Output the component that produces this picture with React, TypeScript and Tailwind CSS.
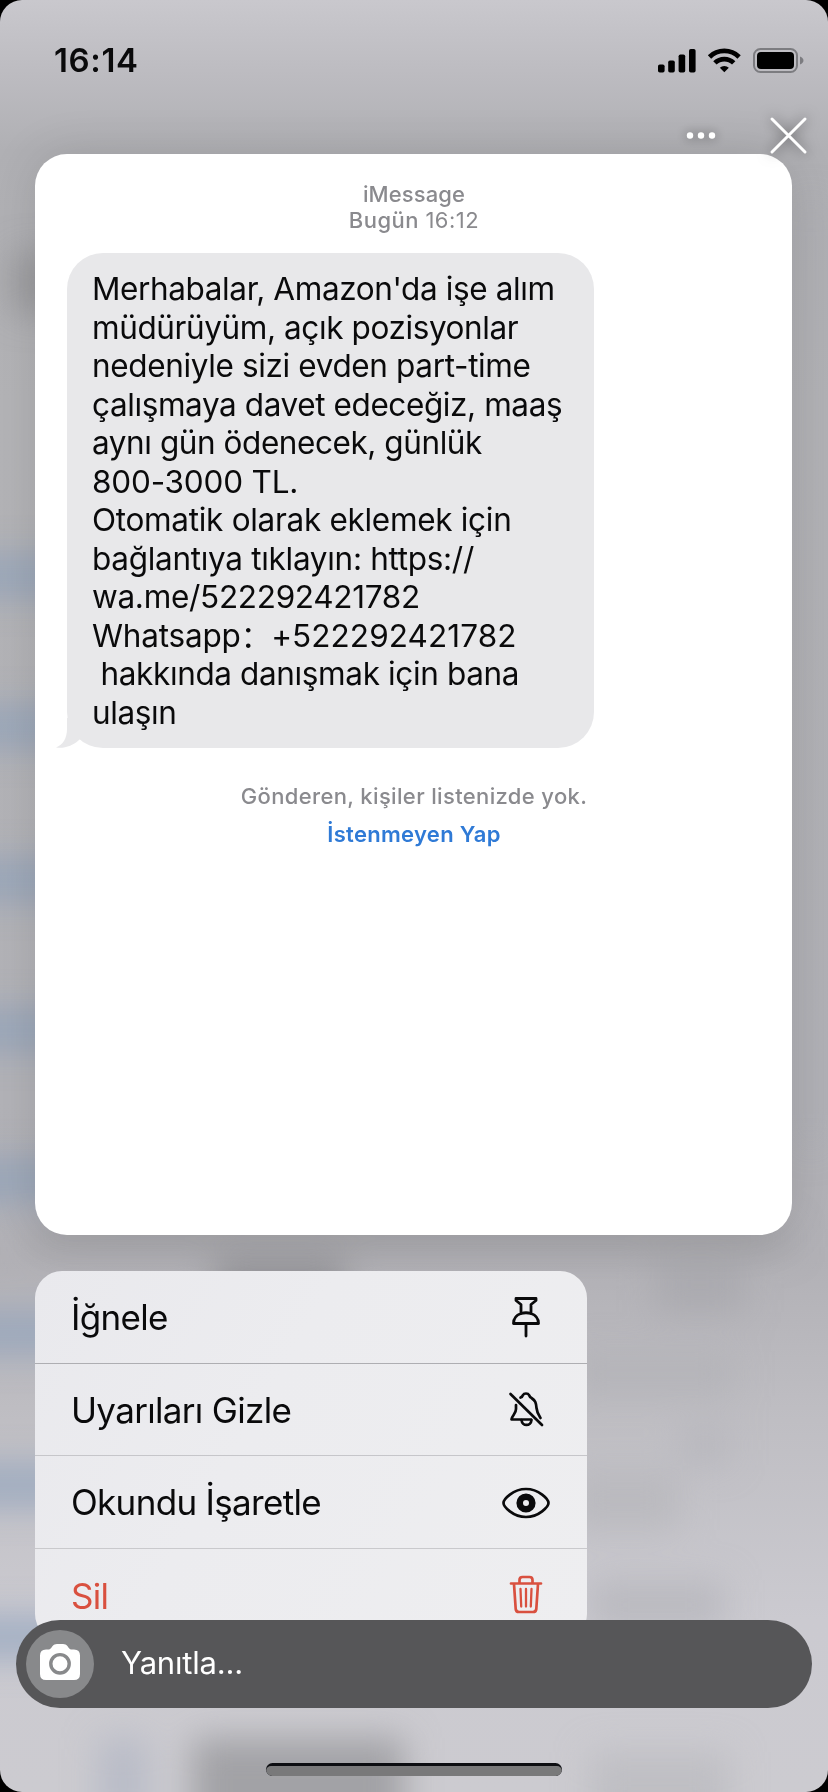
import type { ReactNode } from 'react';

const messageLines: { text: ReactNode; tracking: string }[] = [
  { text: "Merhabalar, Amazon'da işe alım", tracking: 'tracking-[-0.38px]' },
  { text: 'müdürüyüm, açık pozisyonlar', tracking: 'tracking-[-0.4px]' },
  { text: 'nedeniyle sizi evden part-time', tracking: 'tracking-[-0.36px]' },
  { text: 'çalışmaya davet edeceğiz, maaş', tracking: 'tracking-[-0.4px]' },
  { text: 'aynı gün ödenecek, günlük', tracking: 'tracking-[-0.43px]' },
  { text: '800-3000 TL.', tracking: 'tracking-[-0.2px]' },
  { text: 'Otomatik olarak eklemek için', tracking: 'tracking-[-0.3px]' },
  { text: 'bağlantıya tıklayın: https://', tracking: 'tracking-[-0.3px]' },
  { text: 'wa.me/522292421782', tracking: 'tracking-[-0.3px]' },
  {
    text: (
      <>
        Whatsapp<span className="-mr-[8px] text-[30px]">：</span> <span className="tracking-[0.08px]">+522292421782</span>
      </>
    ),
    tracking: 'tracking-[-0.2px]',
  },
  { text: ' hakkında danışmak için bana', tracking: 'tracking-[-0.37px]' },
  { text: 'ulaşın', tracking: 'tracking-[-0.4px]' },
];

// Vertical centres of the blurred unread markers behind the card
const smudges = [576, 727, 880, 1030, 1180, 1333, 1485, 1637];

function Backdrop() {
  return (
    <div className="absolute inset-0 overflow-hidden rounded-[22px] bg-[linear-gradient(180deg,#c9c8cd_0px,#bdbcc1_70px,#b0b0b4_150px,#b4b4b7_400px,#b3b3b8_1100px,#b2b1b6_1260px,#bfbec3_1420px,#cbcad0_1620px,#cccbd0_1792px)]">
      <svg width="828" height="1792" viewBox="0 0 828 1792">
        <defs>
          <filter id="soft" filterUnits="userSpaceOnUse" x="-100" y="0" width="1030" height="1900">
            <feGaussianBlur stdDeviation="17" />
          </filter>
        </defs>
        <g filter="url(#soft)">
          {smudges.map((y) => (
            <rect key={y} x="-60" y={y - 21} width="170" height="42" fill="#8c9fbb" opacity="0.65" />
          ))}
          <rect x="796" y="200" width="30" height="950" fill="#a9a9ae" opacity="0.35" />
          <rect x="10" y="252" width="90" height="62" fill="#8c8c90" opacity="0.6" />
          <rect x="30" y="1225" width="760" height="26" fill="#98989c" opacity="0.5" />
          <rect x="215" y="1262" width="130" height="48" fill="#858589" opacity="0.75" />
          <rect x="655" y="1262" width="90" height="50" fill="#a2a2a7" opacity="0.55" />
          <rect x="570" y="1352" width="165" height="44" fill="#b0b0b5" opacity="0.6" />
          <rect x="680" y="1425" width="50" height="40" fill="#b2b2b7" opacity="0.5" />
          <rect x="570" y="1470" width="110" height="60" fill="#b4b4b9" opacity="0.6" />
          <rect x="590" y="1580" width="135" height="50" fill="#b4b4b9" opacity="0.7" />
          <rect x="98" y="1738" width="50" height="90" fill="#b0b5c3" opacity="0.7" />
          <rect x="192" y="1738" width="212" height="110" fill="#a2a2a6" />
          <rect x="590" y="1752" width="140" height="80" fill="#bbbbc0" opacity="0.8" />
        </g>
      </svg>
    </div>
  );
}

function StatusBar() {
  return (
    <div className="flex h-[116px] items-center justify-between pl-[54px] pr-[23px] pt-1">
      <span className="text-[33px] font-semibold leading-none tracking-[0.6px]">16:14</span>
      <svg className="mt-[3px]" width="148" height="28" viewBox="0 0 148 28">
        <g fill="#000">
          <rect x="1" y="16.5" width="6.6" height="8" rx="1.8" />
          <rect x="11.2" y="12.5" width="6.6" height="12" rx="1.8" />
          <rect x="21.6" y="6.5" width="6.6" height="18" rx="1.8" />
          <rect x="32" y="1" width="6.6" height="23.5" rx="1.8" />
          <path d="M67.3 24.3 62.8 19.8a6.5 6.5 0 0 1 9 0z" />
        </g>
        <g fill="none" stroke="#000" strokeWidth="4.8">
          <path d="M52.5 8.9a21.4 21.4 0 0 1 29.6 0" />
          <path d="M57.9 14.9a13.4 13.4 0 0 1 18.8 0" />
        </g>
        <rect x="97" y="1" width="43" height="23" rx="6.5" fill="none" stroke="#7c7c80" strokeWidth="2" />
        <rect x="100" y="4" width="37" height="17" rx="4" fill="#000" />
        <path d="M143 8.5c4.6 1.4 4.6 6.6 0 8z" fill="#7c7c80" />
      </svg>
    </div>
  );
}

function TopActions() {
  return (
    <div className="relative z-10 flex h-[38px] items-center justify-end gap-[54px] pr-[22px]">
      <svg className="overflow-visible drop-shadow-[0_0_6px_rgba(0,0,0,0.55)]" width="30" height="8" viewBox="0 0 30 8" fill="#fff">
        <circle cx="4" cy="4.5" r="3.2" />
        <circle cx="15" cy="4.5" r="3.2" />
        <circle cx="26" cy="4.5" r="3.2" />
      </svg>
      <svg
        className="overflow-visible drop-shadow-[0_0_7px_rgba(0,0,0,0.6)]"
        width="36"
        height="36"
        viewBox="0 0 36 36"
        stroke="#fff"
        strokeWidth="3"
        strokeLinecap="round"
      >
        <path d="M2 2 35 35M35 2 2 35" />
      </svg>
    </div>
  );
}

function Preview() {
  return (
    <section className="ml-[35px] flex h-[1081px] w-[757px] flex-col rounded-[32px] bg-white pl-8 pr-[31px] pt-[27px] shadow-[0_0_50px_rgba(0,0,0,0.12)]">
      <p className="text-center text-[22px] font-medium leading-[26px] tracking-[0.1px] text-[#8a8a8e]">
        iMessage
        <br />
        <span className="tracking-[0.5px]">
          Bugün <span className="font-normal">16:12</span>
        </span>
      </p>
      <div className="relative mt-5 h-[495px] w-[527px] rounded-[36px] bg-[#e8e8ea] pl-[25px] pt-[17px]">
        <svg className="absolute bottom-0 -left-[11px]" width="40" height="30" viewBox="0 0 40 30">
          <path d="M11 0V11C11 20 7 27 0 29.5C8 31 17 27.5 23 22L34 12V0z" fill="#e8e8ea" />
        </svg>
        <div className="relative">
          {messageLines.map((line, index) => (
            <p key={index} className={`h-[38.5px] whitespace-pre text-[31.5px] leading-[38.5px] ${line.tracking}`}>
              {line.text}
            </p>
          ))}
        </div>
      </div>
      <div className="mt-[35px] space-y-3 text-center text-[22px] leading-[26px]">
        <p className="font-medium tracking-[0.35px] text-[#8a8a8e]">Gönderen, kişiler listenizde yok.</p>
        <p className="font-semibold tracking-[0.3px] text-[#2f7ad6]">İstenmeyen Yap</p>
      </div>
    </section>
  );
}

const PinIcon = () => (
  <svg width="50" height="50" viewBox="0 0 50 50" fill="none" stroke="currentColor" strokeWidth="2.8" strokeLinejoin="round" strokeLinecap="round">
    <path d="M15 5.5H35V7.5L30 11.5V20.5C34.5 22 37.5 25.5 37.5 30.5H12.5C12.5 25.5 15.5 22 20 20.5V11.5L15 7.5z" />
    <path d="M20 20.5Q25 19 30 20.5M25 31.5V43" />
  </svg>
);

const BellOffIcon = () => (
  <svg width="50" height="50" viewBox="0 0 50 50" fill="none" stroke="currentColor" strokeWidth="2.7" strokeLinejoin="round" strokeLinecap="round">
    <path d="M9.5 9 41 40" />
    <path d="M15 20V24C15 29 11 30.5 10.5 34.5H30" />
    <path d="M19.5 12.5C21 12 21.5 11.5 22 10C23 8 27 8 28 10C28.5 11.5 29 12 30.5 13C34.5 15.5 35 18 35.5 23C36 28 37.5 30 39.5 33" />
    <path d="M20.5 35C21 41.5 30 41.5 30.5 35" />
  </svg>
);

const EyeIcon = () => (
  <svg width="50" height="50" viewBox="0 0 50 50" fill="none" stroke="currentColor" strokeWidth="2.7">
    <path d="M2.5 25C2.5 21.5 12 11 25 11S47.5 21.5 47.5 25S38 39 25 39S2.5 28.5 2.5 25z" />
    <circle cx="25" cy="25" r="6.3" strokeWidth="6.6" />
  </svg>
);

const TrashIcon = () => (
  <svg width="50" height="50" viewBox="0 0 50 50" fill="none" stroke="currentColor" strokeWidth="2.7" strokeLinejoin="round" strokeLinecap="round">
    <path d="M10 12.5H40M18.5 12V9Q18.5 6 21.5 6H28.5Q31.5 6 31.5 9V12M13 13L14.7 38Q15 41 18 41H32Q35 41 35.3 38L37 13" />
    <path d="M19.5 18 20.2 35.5M25 18V35.5M30.5 18 29.8 35.5" strokeWidth="2.3" />
  </svg>
);

interface MenuRowProps {
  label: string;
  icon: ReactNode;
  className?: string;
}

function MenuRow({ label, icon, className = '' }: MenuRowProps) {
  return (
    <button className={`flex h-[92.6px] items-center justify-between px-9 pt-[2px] text-left ${className}`}>
      <span className="text-[35px] leading-none tracking-[-0.68px]">{label}</span>
      {icon}
    </button>
  );
}

function ContextMenu() {
  return (
    <div className="ml-[35px] mt-9 flex w-[552px] flex-col overflow-hidden rounded-[27px] bg-[linear-gradient(120deg,#e9e9ed,#ececef_40%,#eeeef0)]">
      <MenuRow label="İğnele" icon={<PinIcon />} className="border-b border-[#aeaeb2]" />
      <MenuRow label="Uyarıları Gizle" icon={<BellOffIcon />} className="border-b border-[#c6c6ca]" />
      <MenuRow label="Okundu İşaretle" icon={<EyeIcon />} className="border-b border-[#c9c9cc]" />
      <MenuRow label="Sil" icon={<TrashIcon />} className="text-[#d9503f]" />
    </div>
  );
}

function ReplyBar() {
  return (
    <div className="flex h-[88px] w-full items-center gap-[27px] rounded-full bg-[#565658] pl-[10px] text-white">
      <div className="flex size-[68px] items-center justify-center rounded-full bg-[#88898b]">
        <svg className="-mt-1" width="40" height="36" viewBox="0 0 40 36">
          <path
            d="M6 5.5H9C11 5.5 12 1.5 14.5 .5Q15.5 0 17 0H23Q24.5 0 25.5 .5C28 1.5 29 5.5 31 5.5H34Q40 5.5 40 11.5V30Q40 36 34 36H6Q0 36 0 30V11.5Q0 5.5 6 5.5z"
            fill="#fff"
          />
          <circle cx="20" cy="19.8" r="9.2" fill="#fff" stroke="#88898b" strokeWidth="3.4" />
        </svg>
      </div>
      <span className="pb-1 text-[31px] leading-none tracking-[-0.2px]">Yanıtla...</span>
    </div>
  );
}

function HomeIndicator() {
  return (
    <div className="h-[13px] w-[296px] overflow-hidden rounded-full bg-[#0c0d11] pt-[3px]">
      <div className="h-[10px] rounded-full bg-[#79797a]" />
    </div>
  );
}

export default function App() {
  return (
    <main className="relative h-[1792px] w-[828px] overflow-hidden bg-black font-['Inter','Noto_Sans_CJK_SC',sans-serif] text-[#0a0a0b]">
      <Backdrop />
      <div className="relative flex flex-col">
        <StatusBar />
        <TopActions />
        <Preview />
        <ContextMenu />
      </div>
      {/* Reply bar floats over the last menu row */}
      <footer className="absolute inset-x-0 bottom-0 flex flex-col items-center gap-[55px] px-4 pb-4">
        <ReplyBar />
        <HomeIndicator />
      </footer>
    </main>
  );
}
